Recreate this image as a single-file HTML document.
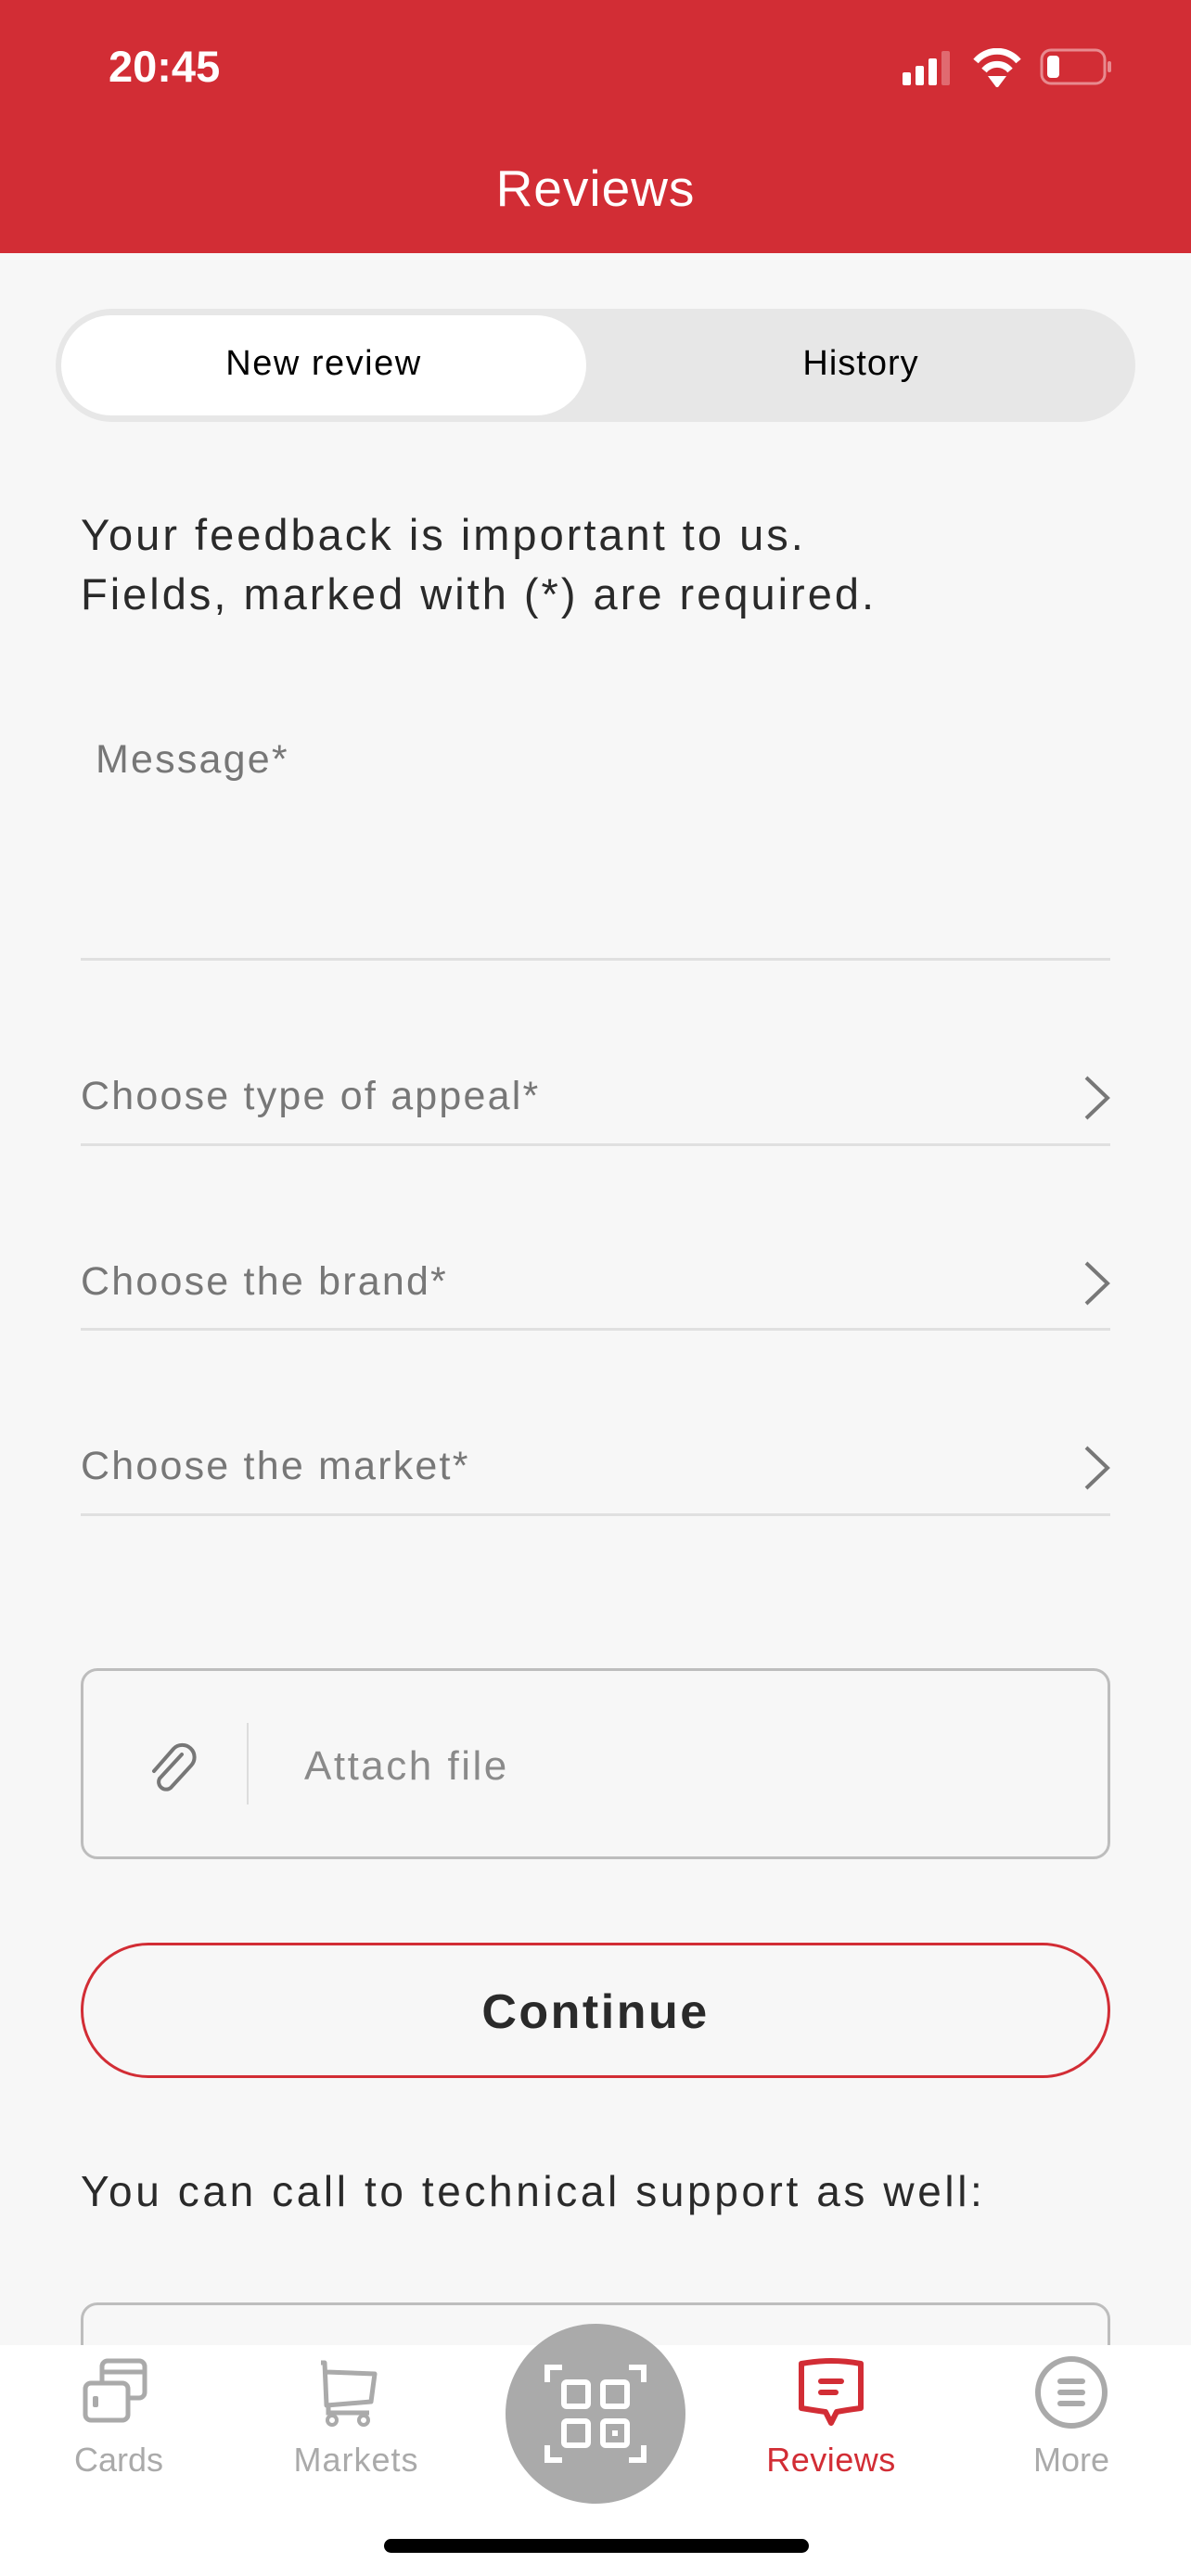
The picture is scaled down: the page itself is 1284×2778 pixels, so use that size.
<!DOCTYPE html>
<html><head><meta charset="utf-8"><style>
*{margin:0;padding:0;box-sizing:border-box}
body{width:1284px;height:2778px;background:#f7f7f7;font-family:"Liberation Sans",sans-serif;position:relative;overflow:hidden;color:#2a2a2a}
.a{position:absolute;white-space:nowrap}
.hdr{position:absolute;left:0;top:0;width:1284px;height:273px;background:#d22d35}
.lbl{font-size:43px;color:#777;letter-spacing:2.2px}
.line{position:absolute;left:87px;width:1110px;height:3px;background:#e0e0e0}
.chev{position:absolute;left:1166px;width:34px;height:50px}
</style></head><body>
<div class="hdr"></div>
<div class="a" style="left:117px;top:44px;font-size:47px;font-weight:bold;color:#fff">20:45</div>
<svg class="a" style="left:970px;top:52px" width="240" height="42" viewBox="0 0 240 42">
<rect x="3" y="26" width="9" height="14" rx="2" fill="#fff"/><rect x="17" y="19" width="9" height="21" rx="2" fill="#fff"/><rect x="31" y="11" width="9" height="29" rx="2" fill="#fff"/><rect x="45" y="3" width="9" height="37" rx="2" fill="#e06a70"/>
<path d="M82 14 A30 30 0 0 1 128 14" stroke="#fff" stroke-width="7" fill="none"/><path d="M91 24 A18 18 0 0 1 119 24" stroke="#fff" stroke-width="7" fill="none"/><path d="M99 32 L105 40 L111 32 Z" fill="#fff" stroke="#fff" stroke-width="4"/>
<rect x="153" y="2" width="68" height="36" rx="10" fill="none" stroke="#e88a8f" stroke-width="3"/><rect x="159" y="8" width="13" height="24" rx="4" fill="#fff"/><rect x="224" y="14" width="4" height="12" rx="2" fill="#e88a8f"/>
</svg>
<div class="a" style="left:0;width:1284px;text-align:center;top:171px;font-size:55px;color:#fff;letter-spacing:1px">Reviews</div>
<div class="a" style="left:60px;top:333px;width:1164px;height:122px;border-radius:61px;background:#e7e7e7"></div>
<div class="a" style="left:66px;top:340px;width:566px;height:108px;border-radius:54px;background:#fff"></div>
<div class="a" style="left:66px;width:566px;text-align:center;top:371px;font-size:38px;color:#000;letter-spacing:1.5px">New review</div>
<div class="a" style="left:632px;width:592px;text-align:center;top:371px;font-size:38px;color:#000;letter-spacing:1px">History</div>
<div class="a" style="left:87px;top:545px;font-size:47px;line-height:64px;color:#2a2a2a;letter-spacing:3px">Your feedback is important to us.<br>Fields, marked with (*) are required.</div>
<div class="a lbl" style="left:103px;top:795px">Message*</div>
<div class="line" style="top:1033px"></div>
<div class="a lbl" style="left:87px;top:1158px">Choose type of appeal*</div>
<svg class="chev" style="top:1159px" viewBox="0 0 34 50"><path d="M5 3 L28 25 L5 47" stroke="#777" stroke-width="4" fill="none"/></svg>
<div class="line" style="top:1233px"></div>
<div class="a lbl" style="left:87px;top:1358px">Choose the brand*</div>
<svg class="chev" style="top:1359px" viewBox="0 0 34 50"><path d="M5 3 L28 25 L5 47" stroke="#777" stroke-width="4" fill="none"/></svg>
<div class="line" style="top:1432px"></div>
<div class="a lbl" style="left:87px;top:1557px">Choose the market*</div>
<svg class="chev" style="top:1558px" viewBox="0 0 34 50"><path d="M5 3 L28 25 L5 47" stroke="#777" stroke-width="4" fill="none"/></svg>
<div class="line" style="top:1632px"></div>
<div class="a" style="left:87px;top:1799px;width:1110px;height:206px;border:3px solid #bdbdbd;border-radius:18px"></div>
<svg class="a" style="left:158px;top:1874px" width="64" height="64" viewBox="0 0 64 64"><path d="M42 14 L18 40 A8 8 0 0 0 30 50 L52 26 A13 13 0 0 0 33 8 L12 32" stroke="#777" stroke-width="4" fill="none" stroke-linecap="round" transform="translate(-4 4)"/></svg>
<div class="a" style="left:266px;top:1858px;width:2px;height:88px;background:#ddd"></div>
<div class="a" style="left:328px;top:1880px;font-size:44px;color:#8a8a8a;letter-spacing:2.5px">Attach file</div>
<div class="a" style="left:87px;top:2095px;width:1110px;height:146px;border:3px solid #d22d35;border-radius:73px"></div>
<div class="a" style="left:87px;width:1110px;text-align:center;top:2140px;font-size:52px;font-weight:bold;color:#2a2a2a;letter-spacing:2.5px">Continue</div>
<div class="a" style="left:87px;top:2336px;font-size:46px;color:#2a2a2a;letter-spacing:3.6px">You can call to technical support as well:</div>
<div class="a" style="left:87px;top:2483px;width:1110px;height:120px;border:3px solid #bdbdbd;border-radius:18px"></div>
<div class="a" style="left:0;top:2529px;width:1284px;height:249px;background:#fff"></div>
<svg class="a" style="left:88px;top:2542px" width="80" height="80" viewBox="0 0 80 80"><rect x="22" y="4" width="46" height="40" rx="6" fill="none" stroke="#aaa" stroke-width="5"/><line x1="22" y1="16" x2="68" y2="16" stroke="#aaa" stroke-width="5"/><rect x="4" y="28" width="46" height="40" rx="6" fill="#fff" stroke="#aaa" stroke-width="5"/><rect x="12" y="42" width="6" height="12" rx="2" fill="#aaa"/></svg>
<div class="a" style="left:48px;width:160px;text-align:center;top:2632px;font-size:36px;color:#aaa">Cards</div>
<svg class="a" style="left:340px;top:2542px" width="90" height="80" viewBox="0 0 90 80"><path d="M6 6 L10 6 L12 52 L60 48 L64 18 L12 16" stroke="#aaa" stroke-width="5" fill="none" stroke-linejoin="round"/><path d="M14 52 L14 60 L58 60" stroke="#aaa" stroke-width="5" fill="none"/><circle cx="18" cy="68" r="5" fill="none" stroke="#aaa" stroke-width="4"/><circle cx="52" cy="68" r="5" fill="none" stroke="#aaa" stroke-width="4"/></svg>
<div class="a" style="left:304px;width:160px;text-align:center;top:2632px;font-size:36px;color:#aaa;letter-spacing:1px">Markets</div>
<div class="a" style="left:545px;top:2506px;width:194px;height:194px;border-radius:97px;background:#aaa"></div>
<svg class="a" style="left:586px;top:2547px" width="112" height="112" viewBox="0 0 112 112"><g stroke="#fff" stroke-width="6" fill="none"><path d="M4 22 L4 6 L20 6 M92 6 L108 6 L108 22 M108 90 L108 106 L92 106 M20 106 L4 106 L4 90"/><rect x="22" y="22" width="26" height="26" rx="3"/><rect x="64" y="22" width="26" height="26" rx="3"/><rect x="22" y="64" width="26" height="26" rx="3"/><rect x="64" y="64" width="26" height="26" rx="3"/></g><rect x="74" y="74" width="6" height="6" fill="#fff"/></svg>
<svg class="a" style="left:856px;top:2543px" width="80" height="80" viewBox="0 0 80 80"><path d="M8 6 Q40 0 72 6 L72 54 Q56 56 46 58 L40 70 L34 58 Q20 56 8 54 Z" stroke="#d22d35" stroke-width="6" fill="none" stroke-linejoin="round"/><rect x="26" y="22" width="28" height="6" rx="3" fill="#d22d35"/><rect x="26" y="34" width="22" height="6" rx="3" fill="#d22d35"/></svg>
<div class="a" style="left:816px;width:160px;text-align:center;top:2632px;font-size:36px;color:#d22d35;letter-spacing:0.5px">Reviews</div>
<svg class="a" style="left:1113px;top:2538px" width="84" height="84" viewBox="0 0 84 84"><circle cx="42" cy="42" r="36" stroke="#aaa" stroke-width="6" fill="none"/><rect x="27" y="27" width="30" height="6" rx="3" fill="#aaa"/><rect x="27" y="39" width="30" height="6" rx="3" fill="#aaa"/><rect x="27" y="51" width="30" height="6" rx="3" fill="#aaa"/></svg>
<div class="a" style="left:1075px;width:160px;text-align:center;top:2632px;font-size:36px;color:#aaa">More</div>
<div class="a" style="left:414px;top:2738px;width:458px;height:15px;border-radius:8px;background:#000"></div>
</body></html>
